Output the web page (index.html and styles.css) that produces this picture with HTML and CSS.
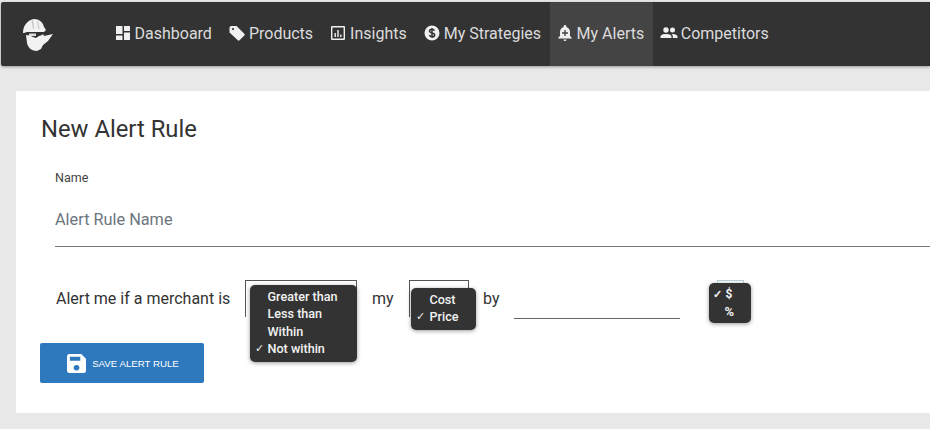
FILE: index.html
```html
<!DOCTYPE html>
<html lang="en">
<head>
<meta charset="utf-8">
<title>New Alert Rule</title>
<link rel="stylesheet" href="styles.css">
</head>
<body>
<nav class="nav">
  <svg class="logo" width="36" height="34" viewBox="0 0 36 34" aria-hidden="true">
    <path fill="#f2f2f2" d="M2 16C2 8 7 3 13 2c5 0 9 3 10 8l2 3-2 2H6l-3 1z"/>
    <path fill="#c4c4c4" d="M12 3l1 9h-1L10.500 4zM17 4l1.500 8h-1l-1.500-8z"/>
    <path fill="#f2f2f2" d="M5 18l8 1 9-2 1 2 9-2-5 7-5 4-2 4-4 2c-5 0-9-3-10-8z"/>
    <path fill="#333" d="M3 16h20l-2 2-3 1-3 2-3-1-4-2-5-1z"/>
    <path fill="#ddd" d="M8 16.500h7v2.500H8z"/>
  </svg>
  <ul class="menu">
    <li class="item"><a class="link" href="#">
      <svg class="icon" viewBox="0 0 16 16"><path d="M1 1h6.500v8H1zM1 10.500h6.500V15H1zM9 1h6v5H9zM9 7.500h6V15H9z"/></svg>Dashboard</a></li>
    <li class="item"><a class="link" href="#">
      <svg class="icon" viewBox="0 0 16 16"><path fill-rule="evenodd" d="M0.500 2.200 1.800 1 7.500 1 15.300 8.800a1.300 1.300 0 0 1 0 1.800l-4.700 4.700a1.300 1.300 0 0 1-1.800 0L.5 7.500zM4 3a1 1 0 1 0 .01 0z"/></svg>Products</a></li>
    <li class="item"><a class="link" href="#">
      <svg class="icon" viewBox="0 0 16 16"><path fill-rule="evenodd" d="M2 1h12a1 1 0 0 1 1 1v12a1 1 0 0 1-1 1H2a1 1 0 0 1-1-1V2a1 1 0 0 1 1-1zm.4 1.400v11.200h11.200V2.400zM4.500 8h1.400v4H4.500zM7.300 5h1.400v7H7.300zM10.100 9.500h1.400V12h-1.400z"/></svg>Insights</a></li>
    <li class="item"><a class="link" href="#">
      <svg class="icon" viewBox="0 0 16 16"><circle cx="8" cy="8" r="7.500"/><path fill="none" stroke="#333" stroke-width="1.500" d="M10.500 5.700C10 4.700 9 4.300 8 4.300c-1.400 0-2.500.7-2.500 1.800 0 2.600 5.200 1.200 5.200 3.800 0 1.100-1.200 1.800-2.600 1.800-1.200 0-2.200-.5-2.700-1.500M8 3v10"/></svg>My Strategies</a></li>
    <li class="item item-active"><a class="link" href="#">
      <svg class="icon" viewBox="0 0 16 16"><path fill-rule="evenodd" d="M8 0a1.300 1.300 0 0 1 1.300 1.300v.6C11.500 2.500 13 4.500 13 7v4l1.800 1.800v.7H1.200v-.7L3 11V7c0-2.500 1.500-4.500 3.700-5.100v-.6A1.300 1.300 0 0 1 8 0zM7.300 5v2.300H5v1.400h2.300V11h1.400V8.700H11V7.300H8.700V5z"/><path d="M6.500 14.500h3a1.500 1.500 0 0 1-3 0z"/></svg>My Alerts</a></li>
    <li class="item"><a class="link" href="#">
      <svg class="icon icon-wide" viewBox="0 0 18 16"><circle cx="6" cy="5" r="2.700"/><circle cx="12.500" cy="5" r="2.500"/><path d="M0.500 13v-1.500C.5 9.800 3.500 9 6 9s5.500.8 5.500 2.500V13zM12.800 13v-1.500c0-1-.5-1.800-1.300-2.400 3-.4 6 .7 6 2.400V13z"/></svg>Competitors</a></li>
  </ul>
</nav>

<main class="card">
  <h1 class="title">New Alert Rule</h1>
  <div class="field">
    <label class="label" for="rule-name">Name</label>
    <input class="name-input" id="rule-name" type="text" placeholder="Alert Rule Name">
  </div>
  <div class="rule">
    <span class="rule-lead">Alert me if a merchant is</span>
    <div class="select select-compare">
      <ul class="popup popup-compare">
        <li>Greater than</li>
        <li>Less than</li>
        <li>Within</li>
        <li class="checked">Not within</li>
      </ul>
    </div>
    <span class="rule-my">my</span>
    <div class="select select-field">
      <ul class="popup popup-field">
        <li>Cost</li>
        <li class="checked">Price</li>
      </ul>
    </div>
    <span class="rule-by">by</span>
    <div class="amount"></div>
    <div class="select select-unit">
      <ul class="popup popup-unit">
        <li class="checked">$</li>
        <li class="unit-percent">%</li>
      </ul>
    </div>
  </div>
  <button class="save" type="button">
    <svg class="save-icon" viewBox="0 0 20 20"><path fill-rule="evenodd" d="M2.500 0H15l5 5v12.500a2.500 2.500 0 0 1-2.500 2.500h-15A2.500 2.500 0 0 1 0 17.500v-15A2.500 2.500 0 0 1 2.500 0zM3 3v4h11V3zm7 8.500a3 3 0 1 0 .01 0z"/></svg>
    SAVE ALERT RULE
  </button>
</main>
</body>
</html>
```

FILE: styles.css
```css
* { box-sizing: border-box; }
html, body { margin: 0; height: 100%; overflow: hidden; }
body {
  background: #e8e8e8;
  font-family: Roboto, "Liberation Sans", sans-serif;
  color: #333;
  padding-top: 2px;
}
.nav {
  display: flex;
  align-items: stretch;
  height: 64px;
  margin-left: 1px;
  background: #333;
  box-shadow: 0 1px 3px rgba(0, 0, 0, .35);
  border-radius: 2px 0 0 2px;
}
.logo { margin: 15px 0 0 20px; flex: none; }
.menu {
  display: flex;
  list-style: none;
  margin: 0 0 0 50px;
  padding: 0;
}
.item { display: flex; }
.item-active { background: #444; margin-left: -1px; }
.item-active .link { padding-left: 7px; padding-right: 8.500px; }
.link {
  display: flex;
  align-items: center;
  gap: 4px;
  padding: 0 9.500px 2px 7.500px;
  color: #dcdcdc;
  font-size: 16px;
  text-decoration: none;
}
.icon { width: 16px; height: 16px; fill: #f0f0f0; flex: none; }
.icon-wide { width: 18px; margin-right: -1.500px; }

.card {
  margin: 25px 0 0 16px;
  height: 322px;
  background: #fff;
  padding: 23px 0 0 24px;
}
.title {
  margin: 0 0 0 1px;
  font-size: 23.800px;
  font-weight: 400;
  line-height: 30px;
  color: #333;
}
.field { margin: 27px 0 0 15px; }
.label {
  display: block;
  font-size: 12.500px;
  line-height: 14px;
  color: #444;
}
.name-input {
  display: block;
  width: 100%;
  height: 55px;
  margin-top: 7px;
  padding: 0;
  border: 0;
  border-bottom: 1px solid #777;
  outline: 0;
  font: 16.300px Roboto, "Liberation Sans", sans-serif;
  background: transparent;
}
.name-input::placeholder { color: #6c757d; opacity: 1; }

.rule {
  display: flex;
  align-items: flex-start;
  margin: 33px 0 0 16px;
  height: 63px;
  font-size: 16px;
  line-height: 38px;
}
.rule-lead { width: 189px; }
.select {
  position: relative;
  height: 37px;
  border: 1px solid #555;
  border-bottom: 0;
}
.select-compare { width: 112px; }
.rule-my { margin-left: 15px; width: 37px; }
.select-field { width: 60px; }
.rule-by { margin-left: 14px; width: 31px; }
.amount {
  width: 166px;
  height: 39px;
  border-bottom: 1px solid #666;
}
.select-unit {
  width: 27px;
  height: 10px;
  margin: 0 0 0 37px;
  border: 1px solid #b9d3dc;
  border-bottom: 0;
}
.popup {
  position: absolute;
  margin: 0;
  padding: 0;
  list-style: none;
  background: #333;
  border-radius: 5px;
  color: #f2f2f2;
  font: 500 12.600px/17.300px Roboto, "Liberation Sans", sans-serif;
  box-shadow: 0 1px 4px rgba(0, 0, 0, .4);
}
.popup li { position: relative; padding-left: 17.500px; white-space: nowrap; }
.popup .checked::before {
  content: "✓";
  position: absolute;
  left: 5px;
  font-size: 11px;
}
.popup-compare { left: 4px; top: 4px; width: 107px; height: 77px; padding-top: 3px; }
.popup-field { left: 1px; top: 7px; width: 65px; height: 42px; padding-top: 3px; }
.popup-field li { padding-left: 18.500px; }
.popup-unit {
  left: -9px;
  top: 2px;
  width: 42px;
  height: 40px;
  padding-top: 3px;
  font-weight: 700;
  font-size: 12px;
}
.popup-unit li { padding-left: 16.500px; }
.popup-unit .checked::before { left: 4px; }
.popup-unit .unit-percent { padding-left: 15.500px; font-size: 13px; }
.save {
  display: flex;
  align-items: center;
  justify-content: center;
  gap: 6px;
  width: 164px;
  height: 40px;
  padding: 0 0 0 2px;
  border: 0;
  border-radius: 2px;
  background: #2e79bd;
  color: #fff;
  font: 400 9.700px "Liberation Sans", Roboto, sans-serif;
  cursor: pointer;
}
.save-icon { width: 19px; height: 19px; fill: #fff; flex: none; }
```
